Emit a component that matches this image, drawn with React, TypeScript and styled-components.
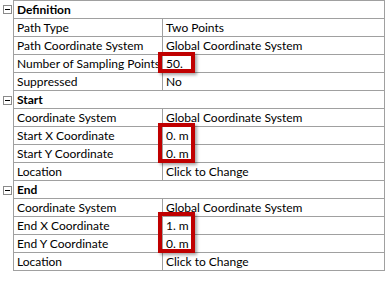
import React from 'react';
import styled, { createGlobalStyle } from 'styled-components';

const GlobalStyle = createGlobalStyle`
  html, body {
    margin: 0;
    padding: 0;
    background: #ffffff;
  }
  body {
    font-family: Lato, 'Open Sans', sans-serif;
    font-size: 12px;
    color: #000000;
  }
`;

const Page = styled.div`
  position: relative;
  width: 386px;
  height: 283px;
  overflow: hidden;
`;

const Grid = styled.div`
  display: flex;
  flex-direction: column;
`;

const Section = styled.div`
  display: flex;
`;

const Gutter = styled.div`
  width: 13px;
  flex: none;
  display: flex;
  justify-content: flex-start;
  padding: 5px 0 0 3px;
  box-sizing: border-box;
`;

const Toggle = styled.div`
  width: 9px;
  height: 9px;
  box-sizing: border-box;
  border: 1px solid #8a8a8a;
  background: #ffffff;
  display: flex;
  align-items: center;
  justify-content: center;

  &::after {
    content: '';
    width: 5px;
    height: 1px;
    background: #000000;
  }
`;

const Table = styled.div<{ $first?: boolean }>`
  width: 372px;
  border-left: 1px solid #a0a0a0;
  border-right: 1px solid #a0a0a0;
  border-top: ${p => (p.$first ? '1px solid #a0a0a0' : 'none')};
  box-sizing: border-box;
`;

const HeaderRow = styled.div`
  height: 18px;
  box-sizing: border-box;
  border-bottom: 1px solid #a0a0a0;
  padding-left: 3px;
  font-weight: 700;
  line-height: 17px;
`;

const Row = styled.div`
  display: grid;
  grid-template-columns: 149px 1fr;
  height: 18px;
  box-sizing: border-box;
  border-bottom: 1px solid #a0a0a0;
  line-height: 17px;
`;

const Label = styled.div`
  padding-left: 3px;
  border-right: 1px solid #a0a0a0;
  white-space: nowrap;
`;

const Value = styled.div`
  padding-left: 3px;
  white-space: nowrap;
`;

const Highlight = styled.div<{ $top: number; $height: number }>`
  position: absolute;
  left: 158px;
  top: ${p => p.$top}px;
  width: 37px;
  height: ${p => p.$height}px;
  box-sizing: border-box;
  border: 4px solid #c00000;
  box-shadow: 2px 2px 3px rgba(0, 0, 0, 0.35);
`;

type Prop = { label: string; value: string };

const sections: { title: string; rows: Prop[] }[] = [
  {
    title: 'Definition',
    rows: [
      { label: 'Path Type', value: 'Two Points' },
      { label: 'Path Coordinate System', value: 'Global Coordinate System' },
      { label: 'Number of Sampling Points', value: '50.' },
      { label: 'Suppressed', value: 'No' },
    ],
  },
  {
    title: 'Start',
    rows: [
      { label: 'Coordinate System', value: 'Global Coordinate System' },
      { label: 'Start X Coordinate', value: '0. m' },
      { label: 'Start Y Coordinate', value: '0. m' },
      { label: 'Location', value: 'Click to Change' },
    ],
  },
  {
    title: 'End',
    rows: [
      { label: 'Coordinate System', value: 'Global Coordinate System' },
      { label: 'End X Coordinate', value: '1. m' },
      { label: 'End Y Coordinate', value: '0. m' },
      { label: 'Location', value: 'Click to Change' },
    ],
  },
];

const App: React.FC = () => {
  return (
    <Page>
      <GlobalStyle />
      <Grid>
        {sections.map((s, i) => (
          <Section key={s.title}>
            <Gutter>
              <Toggle />
            </Gutter>
            <Table $first={i === 0}>
              <HeaderRow>{s.title}</HeaderRow>
              {s.rows.map(r => (
                <Row key={r.label}>
                  <Label>{r.label}</Label>
                  <Value>{r.value}</Value>
                </Row>
              ))}
            </Table>
          </Section>
        ))}
      </Grid>

      {/* red callouts */}
      <Highlight $top={52} $height={21} />
      <Highlight $top={123} $height={40} />
      <Highlight $top={212} $height={41} />
    </Page>
  );
};

export default App;
